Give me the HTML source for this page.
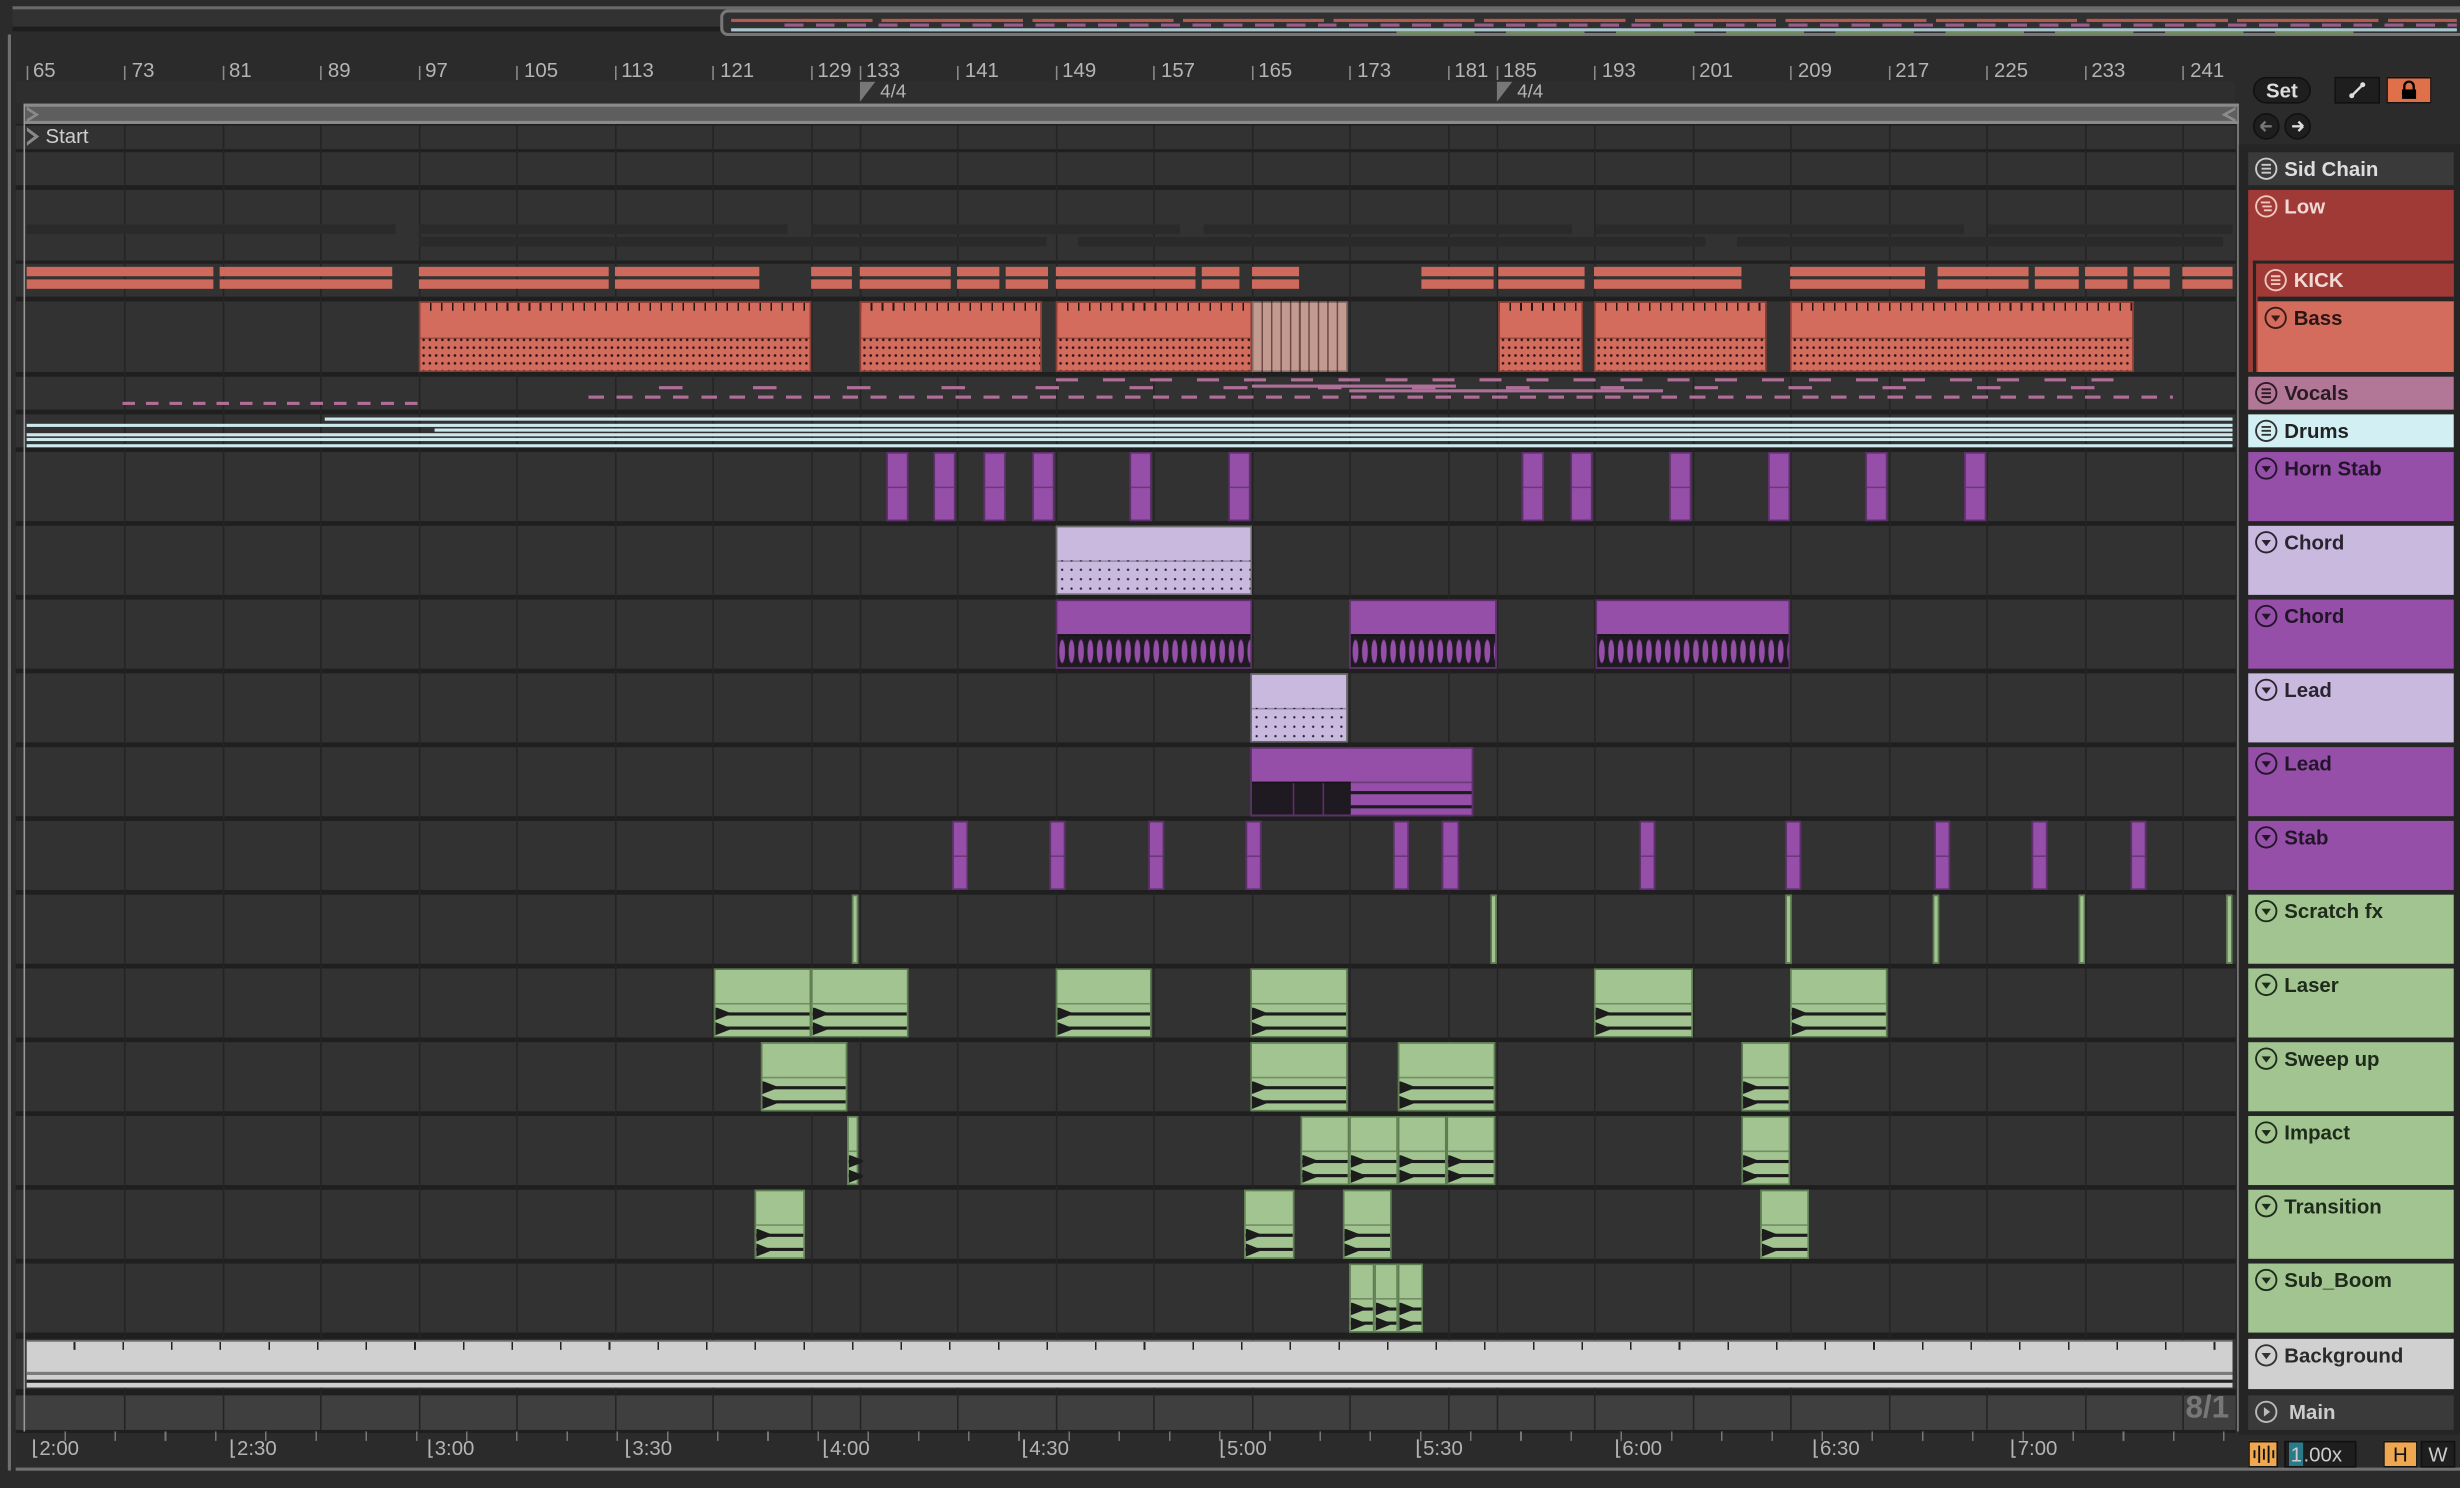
<!DOCTYPE html>
<html><head><meta charset="utf-8">
<style>
html,body{margin:0;padding:0;background:#2b2b2b;width:2460px;height:1488px;overflow:hidden}
#root{position:absolute;left:0;top:0;width:1568px;height:948px;transform:scale(1.56888,1.5696);transform-origin:0 0;background:#2b2b2b;font-family:"Liberation Sans",sans-serif}
.a{position:absolute;box-sizing:border-box}
.row{position:absolute;left:10px;width:1415px;background:#323232}
.gl{position:absolute;top:80px;height:831px;width:1px;background:#242424}
.rn{position:absolute;top:37px;font-family:"Liberation Sans Narrow","Liberation Sans",sans-serif;font-size:13px;color:#b4b4b4}
.rt{position:absolute;top:42px;width:1px;height:9px;background:#8a8a8a}
.cl{position:absolute;box-sizing:border-box;border:1px solid rgba(0,0,0,.3)}
.lo{position:absolute;left:0;right:0;bottom:0;height:50%;border-top:1px solid rgba(0,0,0,.28);box-sizing:border-box}
.kick{background:#cd6a5c;height:6px;border:0}
.bass{background:#d46c5e;border-color:#8b3e36}
.bass .lo{background:radial-gradient(circle,#2a1512 0.7px,transparent 1px) 0 3px/4px 5px,#d46c5e}
.bass .tk{position:absolute;top:0;left:0;right:0;height:5px;background:repeating-linear-gradient(90deg,transparent 0 6px,#2a1512 6px 7px)}
.pu{background:#954fa8;border-color:#5e2f6c}
.pw .lo{background:radial-gradient(ellipse 2px 8px at 50% 50%,#954fa8 85%,transparent 100%) 0 0/6px 100%,#1f1a22}
.lv{background:#c9b9df;border-color:#777}
.lv .lo{background:radial-gradient(circle,#2a2230 0.6px,transparent 0.9px) 0 2px/6px 6px,#c9b9df}
.gr{background:#a1c490;border-color:#5f7d52}
.gr .lo{background:linear-gradient(#1c1c1c,#1c1c1c) 0 30%/100% 2px no-repeat,linear-gradient(#1c1c1c,#1c1c1c) 0 78%/100% 2px no-repeat,#a1c490}
.gr .lo:before,.gr .lo:after{content:"";position:absolute;left:0;width:9px;height:42%;background:#1c1c1c;clip-path:polygon(0 0,100% 42%,100% 58%,0 100%)}
.gr .lo:before{top:8%}.gr .lo:after{top:56%}
.hd{position:absolute;left:1433px;width:131px;box-sizing:border-box;font-weight:bold;font-size:13px;padding:3px 0 0 23px;line-height:16px;white-space:nowrap}
.hd svg{position:absolute;left:4px;top:3px}
.vx{position:absolute;height:2px;background:#b06f98}
.dx{position:absolute;left:0;right:0;height:2px;background:#cde9ee}
</style></head><body><div id="root">

<!-- top overview -->
<div class="a" style="left:8px;top:4px;width:1560px;height:2px;background:#6a6a6a"></div>
<div class="a" style="left:8px;top:6px;width:452px;height:11px;background:#323232"></div>
<div class="a" style="left:8px;top:17px;width:452px;height:3px;background:#1e1e1e"></div>
<div class="a" style="left:459px;top:6px;width:1109px;height:17px;background:#303030;border:2px solid #777;border-right:0;border-radius:5px 0 0 5px"></div>
<div class="a" style="left:466px;top:12px;width:1100px;height:2px;background:repeating-linear-gradient(90deg,#b55a50 0 90px,transparent 90px 96px)"></div>
<div class="a" style="left:500px;top:15px;width:1066px;height:2px;background:repeating-linear-gradient(90deg,#9a5c8a 0 12px,transparent 12px 20px)"></div>
<div class="a" style="left:466px;top:18px;width:1100px;height:2px;background:#a9c6cc"></div>
<div class="a" style="left:890px;top:20px;width:620px;height:2px;background:repeating-linear-gradient(90deg,#6f8a60 0 50px,transparent 50px 70px)"></div>
<div class="a" style="left:5px;top:22px;width:2px;height:915px;background:#707070"></div>

<!-- ruler -->
<div class="a" style="left:10px;top:52px;width:1415px;height:14px;background:#2e2e2e"></div>
<div class="rt" style="left:17px"></div><div class="rn" style="left:21px">65</div>
<div class="rt" style="left:79px"></div><div class="rn" style="left:84px">73</div>
<div class="rt" style="left:142px"></div><div class="rn" style="left:146px">81</div>
<div class="rt" style="left:204px"></div><div class="rn" style="left:209px">89</div>
<div class="rt" style="left:267px"></div><div class="rn" style="left:271px">97</div>
<div class="rt" style="left:329px"></div><div class="rn" style="left:334px">105</div>
<div class="rt" style="left:392px"></div><div class="rn" style="left:396px">113</div>
<div class="rt" style="left:454px"></div><div class="rn" style="left:459px">121</div>
<div class="rt" style="left:517px"></div><div class="rn" style="left:521px">129</div>
<div class="rt" style="left:548px"></div><div class="rn" style="left:552px">133</div>
<div class="rt" style="left:610px"></div><div class="rn" style="left:615px">141</div>
<div class="rt" style="left:673px"></div><div class="rn" style="left:677px">149</div>
<div class="rt" style="left:735px"></div><div class="rn" style="left:740px">157</div>
<div class="rt" style="left:798px"></div><div class="rn" style="left:802px">165</div>
<div class="rt" style="left:860px"></div><div class="rn" style="left:865px">173</div>
<div class="rt" style="left:923px"></div><div class="rn" style="left:927px">181</div>
<div class="rt" style="left:954px"></div><div class="rn" style="left:958px">185</div>
<div class="rt" style="left:1016px"></div><div class="rn" style="left:1021px">193</div>
<div class="rt" style="left:1079px"></div><div class="rn" style="left:1083px">201</div>
<div class="rt" style="left:1141px"></div><div class="rn" style="left:1146px">209</div>
<div class="rt" style="left:1204px"></div><div class="rn" style="left:1208px">217</div>
<div class="rt" style="left:1266px"></div><div class="rn" style="left:1271px">225</div>
<div class="rt" style="left:1329px"></div><div class="rn" style="left:1333px">233</div>
<div class="rt" style="left:1391px"></div><div class="rn" style="left:1396px">241</div>
<div class="a" style="left:548px;top:52px;width:10px;height:13px;background:#777;clip-path:polygon(0 0,100% 0,0 100%)"></div>
<div class="rn" style="left:561px;top:51px;font-size:12px">4/4</div>
<div class="a" style="left:954px;top:52px;width:10px;height:13px;background:#777;clip-path:polygon(0 0,100% 0,0 100%)"></div>
<div class="rn" style="left:967px;top:51px;font-size:12px">4/4</div>

<!-- loop bar -->
<div class="a" style="left:16px;top:66px;width:1411px;height:13px;background:#5e5e5e;border-top:2px solid #8a8a8a;border-bottom:2px solid #8a8a8a"></div>
<div class="a" style="left:17px;top:68px;width:8px;height:10px;border-left:0;background:#8a8a8a;clip-path:polygon(0 0,100% 50%,0 100%,0 80%,60% 50%,0 20%)"></div>
<div class="a" style="left:1416px;top:68px;width:9px;height:10px;background:#8a8a8a;clip-path:polygon(100% 0,0 50%,100% 100%,100% 80%,40% 50%,100% 20%)"></div>

<!-- rows background -->
<div class="a" style="left:10px;top:79px;width:1415px;height:834px;background:#1f1f1f"></div>
<div class="row" style="top:80px;height:15px"></div>
<div class="row" style="top:97px;height:21px"></div>
<div class="row" style="top:121px;height:45px"></div>
<div class="row" style="top:168px;height:21px"></div>
<div class="row" style="top:192px;height:45px"></div>
<div class="row" style="top:240px;height:21px"></div>
<div class="row" style="top:264px;height:21px"></div>
<div class="row" style="top:288px;height:44px"></div>
<div class="row" style="top:335px;height:44px"></div>
<div class="row" style="top:382px;height:44px"></div>
<div class="row" style="top:429px;height:44px"></div>
<div class="row" style="top:476px;height:44px"></div>
<div class="row" style="top:523px;height:44px"></div>
<div class="row" style="top:570px;height:44px"></div>
<div class="row" style="top:617px;height:44px"></div>
<div class="row" style="top:664px;height:44px"></div>
<div class="row" style="top:711px;height:44px"></div>
<div class="row" style="top:758px;height:44px"></div>
<div class="row" style="top:805px;height:44px"></div>
<div class="row" style="top:853px;height:32px"></div>
<div class="row" style="top:889px;height:22px;background:#3f3f3f"></div>

<!-- grid -->
<div class="gl" style="left:79px"></div><div class="gl" style="left:142px"></div><div class="gl" style="left:204px"></div><div class="gl" style="left:267px"></div><div class="gl" style="left:329px"></div><div class="gl" style="left:392px"></div><div class="gl" style="left:454px"></div><div class="gl" style="left:517px"></div><div class="gl" style="left:548px"></div><div class="gl" style="left:610px"></div><div class="gl" style="left:673px"></div><div class="gl" style="left:735px"></div><div class="gl" style="left:798px"></div><div class="gl" style="left:860px"></div><div class="gl" style="left:923px"></div><div class="gl" style="left:954px"></div><div class="gl" style="left:1016px"></div><div class="gl" style="left:1079px"></div><div class="gl" style="left:1141px"></div><div class="gl" style="left:1204px"></div><div class="gl" style="left:1266px"></div><div class="gl" style="left:1329px"></div><div class="gl" style="left:1391px"></div>
<div class="a" style="left:15px;top:66px;width:1px;height:846px;background:#9a9a9a"></div>
<div class="a" style="left:1426px;top:66px;width:1px;height:846px;background:#8a8a8a"></div>

<!-- start locator -->
<div class="a" style="left:17px;top:81px;width:8px;height:12px;background:#8a8a8a;clip-path:polygon(0 0,100% 50%,0 100%,0 80%,60% 50%,0 20%)"></div>
<div class="a" style="left:29px;top:79px;font-size:13px;color:#cfcfcf;line-height:16px">Start</div>

<!-- Low group faint bars -->
<div class="a" style="left:17px;top:143px;width:1406px;height:6px;background:repeating-linear-gradient(90deg,#2a2a2a 0 235px,transparent 235px 250px)"></div>
<div class="a" style="left:267px;top:151px;width:1150px;height:6px;background:repeating-linear-gradient(90deg,#2a2a2a 0 400px,transparent 400px 420px)"></div>

<!-- KICK -->
<div class="a" style="left:0;top:170px;width:1568px;height:15px">
<div class="cl kick" style="top:0;left:17px;width:119px"></div><div class="cl kick" style="top:8px;left:17px;width:119px"></div>
<div class="cl kick" style="top:0;left:140px;width:110px"></div><div class="cl kick" style="top:8px;left:140px;width:110px"></div>
<div class="cl kick" style="top:0;left:267px;width:121px"></div><div class="cl kick" style="top:8px;left:267px;width:121px"></div>
<div class="cl kick" style="top:0;left:392px;width:92px"></div><div class="cl kick" style="top:8px;left:392px;width:92px"></div>
<div class="cl kick" style="top:0;left:517px;width:26px"></div><div class="cl kick" style="top:8px;left:517px;width:26px"></div>
<div class="cl kick" style="top:0;left:548px;width:58px"></div><div class="cl kick" style="top:8px;left:548px;width:58px"></div>
<div class="cl kick" style="top:0;left:610px;width:27px"></div><div class="cl kick" style="top:8px;left:610px;width:27px"></div>
<div class="cl kick" style="top:0;left:641px;width:27px"></div><div class="cl kick" style="top:8px;left:641px;width:27px"></div>
<div class="cl kick" style="top:0;left:673px;width:89px"></div><div class="cl kick" style="top:8px;left:673px;width:89px"></div>
<div class="cl kick" style="top:0;left:766px;width:24px"></div><div class="cl kick" style="top:8px;left:766px;width:24px"></div>
<div class="cl kick" style="top:0;left:798px;width:30px"></div><div class="cl kick" style="top:8px;left:798px;width:30px"></div>
<div class="cl kick" style="top:0;left:906px;width:46px"></div><div class="cl kick" style="top:8px;left:906px;width:46px"></div>
<div class="cl kick" style="top:0;left:955px;width:55px"></div><div class="cl kick" style="top:8px;left:955px;width:55px"></div>
<div class="cl kick" style="top:0;left:1016px;width:94px"></div><div class="cl kick" style="top:8px;left:1016px;width:94px"></div>
<div class="cl kick" style="top:0;left:1141px;width:86px"></div><div class="cl kick" style="top:8px;left:1141px;width:86px"></div>
<div class="cl kick" style="top:0;left:1235px;width:58px"></div><div class="cl kick" style="top:8px;left:1235px;width:58px"></div>
<div class="cl kick" style="top:0;left:1297px;width:28px"></div><div class="cl kick" style="top:8px;left:1297px;width:28px"></div>
<div class="cl kick" style="top:0;left:1329px;width:27px"></div><div class="cl kick" style="top:8px;left:1329px;width:27px"></div>
<div class="cl kick" style="top:0;left:1360px;width:23px"></div><div class="cl kick" style="top:8px;left:1360px;width:23px"></div>
<div class="cl kick" style="top:0;left:1391px;width:32px"></div><div class="cl kick" style="top:8px;left:1391px;width:32px"></div>
</div>

<!-- Bass -->
<div class="cl bass" style="top:192px;height:45px;left:267px;width:250px"><div class="tk"></div><div class="lo"></div></div>
<div class="cl bass" style="top:192px;height:45px;left:548px;width:116px"><div class="tk"></div><div class="lo"></div></div>
<div class="cl bass" style="top:192px;height:45px;left:673px;width:125px"><div class="tk"></div><div class="lo"></div></div>
<div class="cl" style="top:192px;height:45px;left:798px;width:61px;background:repeating-linear-gradient(90deg,#c29a90 0 5px,#6f4a44 5px 6px)"></div>
<div class="cl bass" style="top:192px;height:45px;left:955px;width:54px"><div class="tk"></div><div class="lo"></div></div>
<div class="cl bass" style="top:192px;height:45px;left:1016px;width:110px"><div class="tk"></div><div class="lo"></div></div>
<div class="cl bass" style="top:192px;height:45px;left:1141px;width:219px"><div class="tk"></div><div class="lo"></div></div>

<!-- Vocals -->
<div class="a" style="left:78px;top:256px;width:190px;height:2px;background:repeating-linear-gradient(90deg,#b06f98 0 8px,transparent 8px 15px)"></div>
<div class="a" style="left:375px;top:252px;width:1010px;height:2px;background:repeating-linear-gradient(90deg,#b06f98 0 10px,transparent 10px 18px)"></div>
<div class="a" style="left:390px;top:246px;width:980px;height:2px;background:repeating-linear-gradient(90deg,transparent 0 30px,#b06f98 30px 45px,transparent 45px 60px)"></div>
<div class="a" style="left:673px;top:241px;width:690px;height:2px;background:repeating-linear-gradient(90deg,#b06f98 0 14px,transparent 14px 30px)"></div>
<div class="vx" style="left:860px;top:248px;width:200px"></div>
<div class="vx" style="left:798px;top:245px;width:130px"></div>

<!-- Drums -->
<div class="a" style="left:17px;top:265px;width:1406px;height:20px">
<div class="dx" style="top:1px;left:190px"></div><div class="dx" style="top:5px"></div><div class="dx" style="top:8px;left:260px"></div><div class="dx" style="top:11px"></div><div class="dx" style="top:14px"></div><div class="dx" style="top:18px"></div>
</div>

<!-- Horn Stab -->
<div class="cl pu" style="top:288px;height:44px;left:565px;width:14px"><div class="lo" style="border-top-color:rgba(0,0,0,.3)"></div></div>
<div class="cl pu" style="top:288px;height:44px;left:595px;width:14px"><div class="lo"></div></div>
<div class="cl pu" style="top:288px;height:44px;left:627px;width:14px"><div class="lo"></div></div>
<div class="cl pu" style="top:288px;height:44px;left:658px;width:14px"><div class="lo"></div></div>
<div class="cl pu" style="top:288px;height:44px;left:720px;width:14px"><div class="lo"></div></div>
<div class="cl pu" style="top:288px;height:44px;left:783px;width:14px"><div class="lo"></div></div>
<div class="cl pu" style="top:288px;height:44px;left:970px;width:14px"><div class="lo"></div></div>
<div class="cl pu" style="top:288px;height:44px;left:1001px;width:14px"><div class="lo"></div></div>
<div class="cl pu" style="top:288px;height:44px;left:1064px;width:14px"><div class="lo"></div></div>
<div class="cl pu" style="top:288px;height:44px;left:1127px;width:14px"><div class="lo"></div></div>
<div class="cl pu" style="top:288px;height:44px;left:1189px;width:14px"><div class="lo"></div></div>
<div class="cl pu" style="top:288px;height:44px;left:1252px;width:14px"><div class="lo"></div></div>

<!-- Chord light -->
<div class="cl lv" style="top:335px;height:44px;left:673px;width:125px;border-color:#6a6a6a"><div class="lo"></div></div>
<!-- Chord purple -->
<div class="cl pu pw" style="top:382px;height:44px;left:673px;width:125px"><div class="lo"></div></div>
<div class="cl pu pw" style="top:382px;height:44px;left:860px;width:94px"><div class="lo"></div></div>
<div class="cl pu pw" style="top:382px;height:44px;left:1017px;width:124px"><div class="lo"></div></div>
<!-- Lead light -->
<div class="cl lv" style="top:429px;height:44px;left:797px;width:62px;border-color:#6a6a6a"><div class="lo"></div></div>
<!-- Lead purple -->
<div class="cl pu" style="top:476px;height:44px;left:797px;width:142px"><div class="lo" style="background:linear-gradient(90deg,#1f1a22 0 45%,transparent 45%),linear-gradient(#1c1c1c,#1c1c1c) 0 30%/100% 2px no-repeat,linear-gradient(#1c1c1c,#1c1c1c) 0 78%/100% 2px no-repeat,#954fa8"></div></div>
<div class="a" style="left:824px;top:499px;width:1px;height:21px;background:#5e2f6c"></div>
<div class="a" style="left:843px;top:499px;width:1px;height:21px;background:#5e2f6c"></div>

<!-- Stab -->
<div class="cl pu" style="top:523px;height:44px;left:607px;width:10px"><div class="lo"></div></div>
<div class="cl pu" style="top:523px;height:44px;left:669px;width:10px"><div class="lo"></div></div>
<div class="cl pu" style="top:523px;height:44px;left:732px;width:10px"><div class="lo"></div></div>
<div class="cl pu" style="top:523px;height:44px;left:794px;width:10px"><div class="lo"></div></div>
<div class="cl pu" style="top:523px;height:44px;left:888px;width:10px"><div class="lo"></div></div>
<div class="cl pu" style="top:523px;height:44px;left:919px;width:11px"><div class="lo"></div></div>
<div class="cl pu" style="top:523px;height:44px;left:1045px;width:10px"><div class="lo"></div></div>
<div class="cl pu" style="top:523px;height:44px;left:1138px;width:10px"><div class="lo"></div></div>
<div class="cl pu" style="top:523px;height:44px;left:1233px;width:10px"><div class="lo"></div></div>
<div class="cl pu" style="top:523px;height:44px;left:1295px;width:10px"><div class="lo"></div></div>
<div class="cl pu" style="top:523px;height:44px;left:1358px;width:10px"><div class="lo"></div></div>

<!-- Scratch -->
<div class="cl gr" style="top:570px;height:44px;left:543px;width:4px"></div>
<div class="cl gr" style="top:570px;height:44px;left:950px;width:4px"></div>
<div class="cl gr" style="top:570px;height:44px;left:1138px;width:4px"></div>
<div class="cl gr" style="top:570px;height:44px;left:1232px;width:4px"></div>
<div class="cl gr" style="top:570px;height:44px;left:1325px;width:4px"></div>
<div class="cl gr" style="top:570px;height:44px;left:1419px;width:4px"></div>

<!-- Laser -->
<div class="cl gr" style="top:617px;height:44px;left:455px;width:62px"><div class="lo"></div></div>
<div class="cl gr" style="top:617px;height:44px;left:517px;width:62px"><div class="lo"></div></div>
<div class="cl gr" style="top:617px;height:44px;left:673px;width:61px"><div class="lo"></div></div>
<div class="cl gr" style="top:617px;height:44px;left:797px;width:62px"><div class="lo"></div></div>
<div class="cl gr" style="top:617px;height:44px;left:1016px;width:63px"><div class="lo"></div></div>
<div class="cl gr" style="top:617px;height:44px;left:1141px;width:62px"><div class="lo"></div></div>
<!-- Sweep -->
<div class="cl gr" style="top:664px;height:44px;left:485px;width:55px"><div class="lo"></div></div>
<div class="cl gr" style="top:664px;height:44px;left:797px;width:62px"><div class="lo"></div></div>
<div class="cl gr" style="top:664px;height:44px;left:891px;width:62px"><div class="lo"></div></div>
<div class="cl gr" style="top:664px;height:44px;left:1110px;width:31px"><div class="lo"></div></div>
<!-- Impact -->
<div class="cl gr" style="top:711px;height:44px;left:540px;width:7px"><div class="lo"></div></div>
<div class="cl gr" style="top:711px;height:44px;left:829px;width:31px"><div class="lo"></div></div>
<div class="cl gr" style="top:711px;height:44px;left:860px;width:31px"><div class="lo"></div></div>
<div class="cl gr" style="top:711px;height:44px;left:891px;width:31px"><div class="lo"></div></div>
<div class="cl gr" style="top:711px;height:44px;left:922px;width:31px"><div class="lo"></div></div>
<div class="cl gr" style="top:711px;height:44px;left:1110px;width:31px"><div class="lo"></div></div>
<!-- Transition -->
<div class="cl gr" style="top:758px;height:44px;left:481px;width:32px"><div class="lo"></div></div>
<div class="cl gr" style="top:758px;height:44px;left:793px;width:32px"><div class="lo"></div></div>
<div class="cl gr" style="top:758px;height:44px;left:856px;width:31px"><div class="lo"></div></div>
<div class="cl gr" style="top:758px;height:44px;left:1122px;width:31px"><div class="lo"></div></div>
<!-- Sub boom -->
<div class="cl gr" style="top:805px;height:44px;left:860px;width:16px"><div class="lo"></div></div>
<div class="cl gr" style="top:805px;height:44px;left:876px;width:15px"><div class="lo"></div></div>
<div class="cl gr" style="top:805px;height:44px;left:891px;width:16px"><div class="lo"></div></div>

<!-- Background clip -->
<div class="cl" style="top:854px;height:30px;left:17px;width:1406px;background:#d0d0d0;border:0;border-top:1px solid #888">
<div class="a" style="left:0;right:0;top:0;height:5px;background:repeating-linear-gradient(90deg,transparent 0 30px,#222 30px 31px)"></div>
<div class="a" style="left:0;right:0;top:19px;height:2px;background:#7a7a7a"></div>
<div class="a" style="left:0;right:0;top:24px;height:2px;background:#222"></div>
</div>
<div class="a" style="left:1393px;top:886px;font-size:20px;font-weight:bold;color:#777;font-family:'Liberation Sans Narrow','Liberation Sans',sans-serif">8/1</div>

<!-- time ruler bottom -->
<div class="a" style="left:10px;top:912px;width:1417px;height:6px;background:repeating-linear-gradient(90deg,transparent 0 31px,#777 31px 32px)"></div>
<div class="a" style="left:10px;top:935px;width:1558px;height:3px;background:#707070"></div>
<div class="rn" style="top:915px;left:20px;font-size:13px">⌊2:00</div>
<div class="rn" style="top:915px;left:146px;font-size:13px">⌊2:30</div>
<div class="rn" style="top:915px;left:272px;font-size:13px">⌊3:00</div>
<div class="rn" style="top:915px;left:398px;font-size:13px">⌊3:30</div>
<div class="rn" style="top:915px;left:524px;font-size:13px">⌊4:00</div>
<div class="rn" style="top:915px;left:651px;font-size:13px">⌊4:30</div>
<div class="rn" style="top:915px;left:777px;font-size:13px">⌊5:00</div>
<div class="rn" style="top:915px;left:902px;font-size:13px">⌊5:30</div>
<div class="rn" style="top:915px;left:1029px;font-size:13px">⌊6:00</div>
<div class="rn" style="top:915px;left:1155px;font-size:13px">⌊6:30</div>
<div class="rn" style="top:915px;left:1281px;font-size:13px">⌊7:00</div>

<!-- right side controls -->
<div class="a" style="left:1427px;top:92px;width:141px;height:822px;background:#252525"></div>
<div class="a" style="left:1436px;top:49px;width:37px;height:17px;border-radius:9px;background:#1e1e1e;border:1px solid #111;color:#ddd;font-size:13px;font-weight:bold;text-align:center;line-height:15px">Set</div>
<div class="a" style="left:1488px;top:49px;width:29px;height:17px;background:#1e1e1e;border:1px solid #111"><svg width="27" height="15"><line x1="10" y1="11" x2="17" y2="4" stroke="#ddd" stroke-width="1.5"/><circle cx="10" cy="11" r="1.6" fill="#ddd"/><circle cx="17" cy="4" r="1.6" fill="#ddd"/></svg></div>
<div class="a" style="left:1521px;top:49px;width:29px;height:17px;background:#e0704a;border:1px solid #111"><svg width="27" height="15"><path d="M10.5 7V5a3 3 0 0 1 6 0v2" fill="none" stroke="#000" stroke-width="1.5"/><rect x="9" y="7" width="9" height="6" fill="#000"/></svg></div>
<div class="a" style="left:1436px;top:72px;width:17px;height:17px;border-radius:50%;background:#1e1e1e;border:1px solid #111"><svg width="15" height="15"><path d="M4 7.5h7M4 7.5l3-3M4 7.5l3 3" stroke="#777" stroke-width="1.5" fill="none"/></svg></div>
<div class="a" style="left:1456px;top:72px;width:17px;height:17px;border-radius:50%;background:#1e1e1e;border:1px solid #111"><svg width="15" height="15"><path d="M11 7.5H4M11 7.5l-3-3M11 7.5l-3 3" stroke="#ddd" stroke-width="1.5" fill="none"/></svg></div>

<!-- headers -->
<div class="hd" style="top:97px;height:21px;background:#3a3a3a;color:#ddd"><svg width="15" height="15"><circle cx="7.5" cy="7.5" r="6.5" fill="none" stroke="#ccc" stroke-width="1.2"/><path d="M4.5 5h6M4.5 7.5h6M4.5 10h6" stroke="#ccc" stroke-width="1.2"/></svg>Sid Chain</div>
<div class="hd" style="top:121px;height:116px;background:#a03a36;color:#f0d8d4"><svg width="15" height="15"><circle cx="7.5" cy="7.5" r="6.5" fill="none" stroke="#f0c8c0" stroke-width="1.2"/><path d="M4 5h6M5 7.5h6M6 10h5" stroke="#f0c8c0" stroke-width="1.2"/></svg>Low</div>
<div class="a" style="left:1436px;top:166px;width:128px;height:2px;background:#252525"></div>
<div class="a" style="left:1436px;top:166px;width:2px;height:71px;background:#252525"></div>
<div class="hd" style="top:168px;height:21px;left:1439px;width:125px;background:#a03a36;color:#f0d8d4"><svg width="15" height="15"><circle cx="7.5" cy="7.5" r="6.5" fill="none" stroke="#f0c8c0" stroke-width="1.2"/><path d="M4.5 5h6M4.5 7.5h6M4.5 10h6" stroke="#f0c8c0" stroke-width="1.2"/></svg>KICK</div>
<div class="a" style="left:1439px;top:189px;width:125px;height:3px;background:#252525"></div>
<div class="hd" style="top:192px;height:45px;left:1439px;width:125px;background:#d46c5e;color:#2a1614"><svg width="15" height="15"><circle cx="7.5" cy="7.5" r="6.5" fill="none" stroke="#3a1a16" stroke-width="1.2"/><path d="M4.5 6h6l-3 4z" fill="#3a1a16"/></svg>Bass</div>
<div class="hd" style="top:240px;height:21px;background:#b27797;color:#2a1a24"><svg width="15" height="15"><circle cx="7.5" cy="7.5" r="6.5" fill="none" stroke="#2a1a24" stroke-width="1.2"/><path d="M4.5 5h6M4.5 7.5h6M4.5 10h6" stroke="#2a1a24" stroke-width="1.2"/></svg>Vocals</div>
<div class="hd" style="top:264px;height:21px;background:#d2f0f4;color:#222"><svg width="15" height="15"><circle cx="7.5" cy="7.5" r="6.5" fill="none" stroke="#333" stroke-width="1.2"/><path d="M4.5 5h6M4.5 7.5h6M4.5 10h6" stroke="#333" stroke-width="1.2"/></svg>Drums</div>
<div class="hd" style="top:288px;height:44px;background:#954fa8;color:#22152a"><svg width="15" height="15"><circle cx="7.5" cy="7.5" r="6.5" fill="none" stroke="#22152a" stroke-width="1.2"/><path d="M4.5 6h6l-3 4z" fill="#22152a"/></svg>Horn Stab</div>
<div class="hd" style="top:335px;height:44px;background:#c9b9df;color:#2a2430"><svg width="15" height="15"><circle cx="7.5" cy="7.5" r="6.5" fill="none" stroke="#2a2430" stroke-width="1.2"/><path d="M4.5 6h6l-3 4z" fill="#2a2430"/></svg>Chord</div>
<div class="hd" style="top:382px;height:44px;background:#954fa8;color:#22152a"><svg width="15" height="15"><circle cx="7.5" cy="7.5" r="6.5" fill="none" stroke="#22152a" stroke-width="1.2"/><path d="M4.5 6h6l-3 4z" fill="#22152a"/></svg>Chord</div>
<div class="hd" style="top:429px;height:44px;background:#c9b9df;color:#2a2430"><svg width="15" height="15"><circle cx="7.5" cy="7.5" r="6.5" fill="none" stroke="#2a2430" stroke-width="1.2"/><path d="M4.5 6h6l-3 4z" fill="#2a2430"/></svg>Lead</div>
<div class="hd" style="top:476px;height:44px;background:#954fa8;color:#22152a"><svg width="15" height="15"><circle cx="7.5" cy="7.5" r="6.5" fill="none" stroke="#22152a" stroke-width="1.2"/><path d="M4.5 6h6l-3 4z" fill="#22152a"/></svg>Lead</div>
<div class="hd" style="top:523px;height:44px;background:#954fa8;color:#22152a"><svg width="15" height="15"><circle cx="7.5" cy="7.5" r="6.5" fill="none" stroke="#22152a" stroke-width="1.2"/><path d="M4.5 6h6l-3 4z" fill="#22152a"/></svg>Stab</div>
<div class="hd" style="top:570px;height:44px;background:#a1c490;color:#1e2a1a"><svg width="15" height="15"><circle cx="7.5" cy="7.5" r="6.5" fill="none" stroke="#1e2a1a" stroke-width="1.2"/><path d="M4.5 6h6l-3 4z" fill="#1e2a1a"/></svg>Scratch fx</div>
<div class="hd" style="top:617px;height:44px;background:#a1c490;color:#1e2a1a"><svg width="15" height="15"><circle cx="7.5" cy="7.5" r="6.5" fill="none" stroke="#1e2a1a" stroke-width="1.2"/><path d="M4.5 6h6l-3 4z" fill="#1e2a1a"/></svg>Laser</div>
<div class="hd" style="top:664px;height:44px;background:#a1c490;color:#1e2a1a"><svg width="15" height="15"><circle cx="7.5" cy="7.5" r="6.5" fill="none" stroke="#1e2a1a" stroke-width="1.2"/><path d="M4.5 6h6l-3 4z" fill="#1e2a1a"/></svg>Sweep up</div>
<div class="hd" style="top:711px;height:44px;background:#a1c490;color:#1e2a1a"><svg width="15" height="15"><circle cx="7.5" cy="7.5" r="6.5" fill="none" stroke="#1e2a1a" stroke-width="1.2"/><path d="M4.5 6h6l-3 4z" fill="#1e2a1a"/></svg>Impact</div>
<div class="hd" style="top:758px;height:44px;background:#a1c490;color:#1e2a1a"><svg width="15" height="15"><circle cx="7.5" cy="7.5" r="6.5" fill="none" stroke="#1e2a1a" stroke-width="1.2"/><path d="M4.5 6h6l-3 4z" fill="#1e2a1a"/></svg>Transition</div>
<div class="hd" style="top:805px;height:44px;background:#a1c490;color:#1e2a1a"><svg width="15" height="15"><circle cx="7.5" cy="7.5" r="6.5" fill="none" stroke="#1e2a1a" stroke-width="1.2"/><path d="M4.5 6h6l-3 4z" fill="#1e2a1a"/></svg>Sub_Boom</div>
<div class="hd" style="top:853px;height:32px;background:#d0d0d0;color:#2a2a2a"><svg width="15" height="15"><circle cx="7.5" cy="7.5" r="6.5" fill="none" stroke="#333" stroke-width="1.2"/><path d="M4.5 6h6l-3 4z" fill="#333"/></svg>Background</div>
<div class="hd" style="top:889px;height:22px;background:#3a3a3a;color:#ccc;padding-left:26px"><svg width="15" height="15"><circle cx="7.5" cy="7.5" r="6.5" fill="none" stroke="#bbb" stroke-width="1.2"/><path d="M6 4.5l4 3-4 3z" fill="#bbb"/></svg>Main</div>

<!-- bottom right -->
<div class="a" style="left:1433px;top:918px;width:19px;height:17px;background:#f0a850;border:1px solid #111"><svg width="17" height="15"><path d="M3 5v5M6 2v11M9 4v7M12 2v11M15 5v5" stroke="#111" stroke-width="1.2"/></svg></div>
<div class="a" style="left:1456px;top:918px;width:46px;height:17px;background:#1e1e1e;border:1px solid #111;font-size:13px;color:#ccc;line-height:15px;padding-left:2px"><span style="background:#2a7a8a;padding:0 1px">1</span>.00x</div>
<div class="a" style="left:1519px;top:918px;width:22px;height:17px;background:#f0a850;border:1px solid #111;font-size:13px;color:#111;text-align:center;line-height:15px">H</div>
<div class="a" style="left:1543px;top:918px;width:22px;height:17px;background:#1e1e1e;border:1px solid #111;font-size:13px;color:#ccc;text-align:center;line-height:15px">W</div>
<div class="a" style="left:0;top:937px;width:1568px;height:11px;background:#2b2b2b"></div>
</div></body></html>
